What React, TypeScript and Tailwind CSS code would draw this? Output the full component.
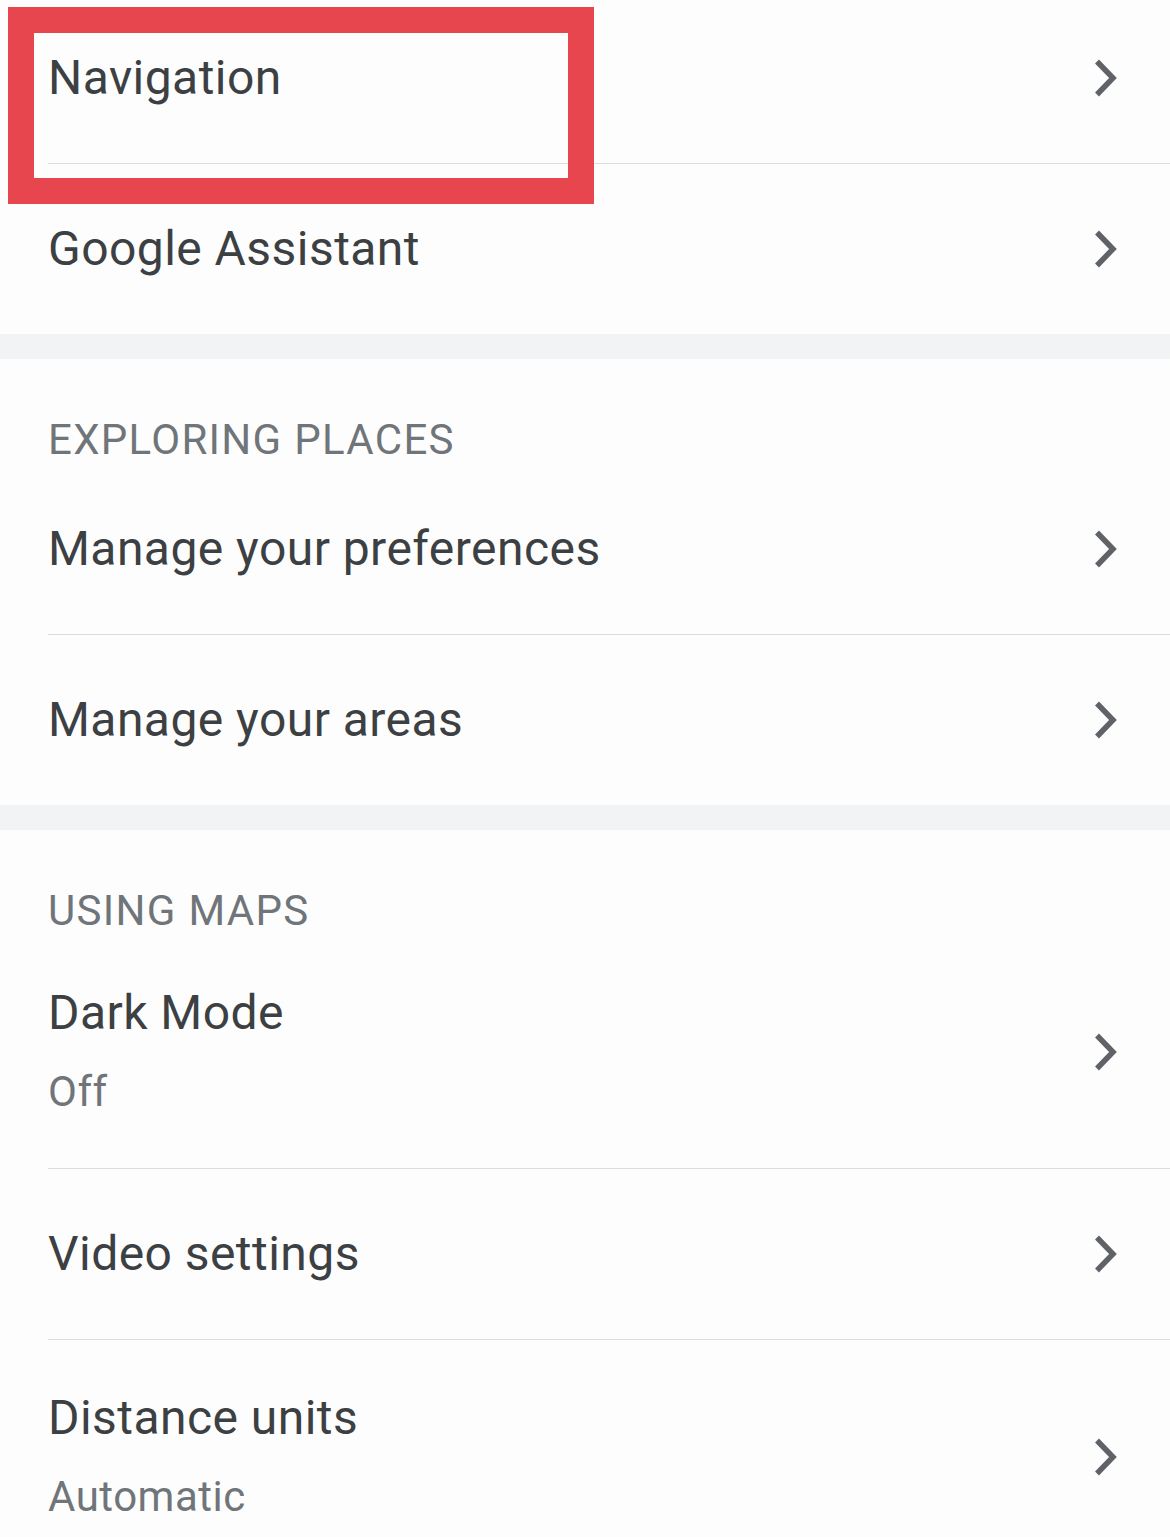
import React from "react";

const font = { fontFamily: "Roboto, 'Noto Sans', Arial, sans-serif" };

function Chevron() {
  return (
    <svg width="30" height="40" viewBox="0 0 30 40" className="shrink-0">
      <polyline
        points="7,3.5 23,20 7,36.5"
        fill="none"
        stroke="#5f6368"
        strokeWidth="5.5"
        strokeLinecap="butt"
        strokeLinejoin="miter"
      />
    </svg>
  );
}

function Row({
  title,
  subtitle,
  divider = true,
  first = false,
}: {
  title: string;
  subtitle?: string;
  divider?: boolean;
  first?: boolean;
}) {
  return (
    <div className={`relative pl-[46px] ${first ? "-mt-[7px]" : ""}`}>
      <div
        className={`flex items-center justify-between pr-[50px] ${
          subtitle ? "h-[233px]" : "h-[170px]"
        }`}
      >
        <div className={`flex flex-col pl-[2px] ${subtitle ? "pt-[2px]" : ""}`}>
          <div className="text-[48px] leading-[56px] tracking-[0.45px] text-[#3c4043]">{title}</div>
          {subtitle && (
            <div className="mt-[23px] text-[42px] leading-[56px] tracking-[0.5px] text-[#70757a]">
              {subtitle}
            </div>
          )}
        </div>
        <Chevron />
      </div>
      {divider && <div className="ml-[2px] h-px bg-[#dadce0]" />}
    </div>
  );
}

function Header({ text }: { text: string }) {
  return (
    <div className="h-[105px] pl-[48px] pt-[60px]">
      <div className="text-[42px] leading-[42px] tracking-[1.3px] text-[#70757a]">{text}</div>
    </div>
  );
}

function Band() {
  return <div className="h-[25px] bg-[#f1f3f4]" />;
}

export default function App() {
  return (
    <div className="relative w-[1170px] h-[1537px] overflow-hidden bg-[#fdfdfd]" style={font}>
      <Row title="Navigation" first />
      <Row title="Google Assistant" divider={false} />
      <Band />
      <Header text="EXPLORING PLACES" />
      <Row title="Manage your preferences" />
      <Row title="Manage your areas" divider={false} />
      <Band />
      <Header text="USING MAPS" />
      <Row title="Dark Mode" subtitle="Off" />
      <Row title="Video settings" />
      <Row title="Distance units" subtitle="Automatic" />
      <div className="absolute left-[8px] top-[7px] w-[586px] h-[197px] border-[26px] border-[#e8464e] pointer-events-none" />
    </div>
  );
}
